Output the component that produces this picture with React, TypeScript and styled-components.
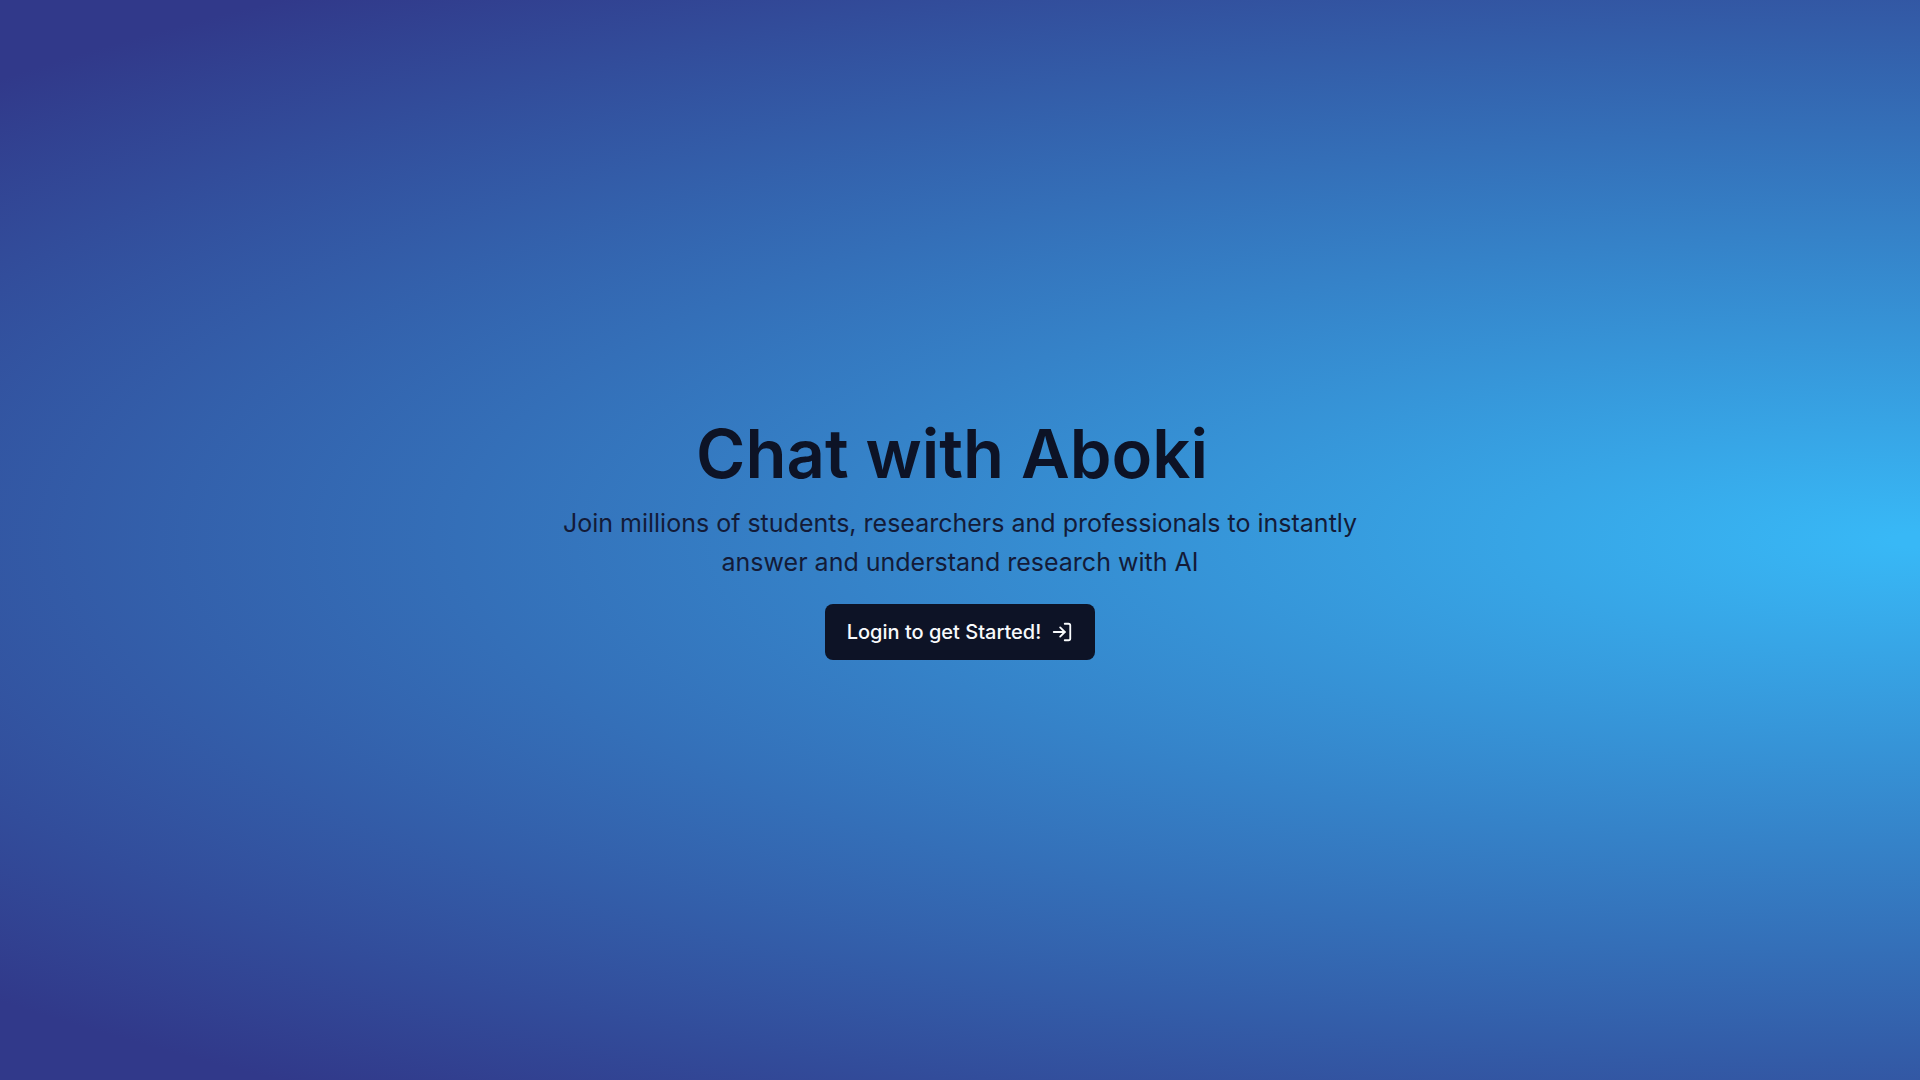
import React from "react";
import styled, { createGlobalStyle } from "styled-components";
import { LogIn } from "lucide-react";

const GlobalStyle = createGlobalStyle`
  *, *::before, *::after { box-sizing: border-box; }
  body { margin: 0; font-family: Inter, "Liberation Sans", sans-serif; color: #0d1326; }
`;

const Page = styled.main`
  display: flex;
  align-items: center;
  justify-content: center;
  min-height: 100vh;
  padding: 24px;
  background: radial-gradient(ellipse at right, #38b8f6 1%, #31398a 93%);
`;

const Hero = styled.section`
  display: flex;
  flex-direction: column;
  align-items: center;
  text-align: center;
`;

const Title = styled.h1`
  margin: 0 16px 0 0;
  font-size: 67px;
  line-height: 66px;
  font-weight: 600;
`;

const Lead = styled.p`
  max-width: 820px;
  margin: 17px 0 0;
  color: #131b38;
  font-size: 25px;
  line-height: 39px;
  font-weight: 400;
`;

const LoginButton = styled.button`
  display: inline-flex;
  align-items: center;
  gap: 10px;
  height: 56px;
  margin-top: 22px;
  padding: 0 22px;
  border: 0;
  border-radius: 8px;
  background: #0d1326;
  color: #f8fafc;
  font: 500 20px/28px Inter, "Liberation Sans", sans-serif;
  cursor: pointer;
`;

export default function App() {
  return (
    <>
      <GlobalStyle />
      <Page>
        <Hero>
          <Title>Chat with Aboki</Title>
          <Lead>
            Join millions of students, researchers and professionals to instantly answer and understand research with AI
          </Lead>
          <LoginButton type="button">
            Login to get Started!
            <LogIn size={22} aria-hidden="true" />
          </LoginButton>
        </Hero>
      </Page>
    </>
  );
}
